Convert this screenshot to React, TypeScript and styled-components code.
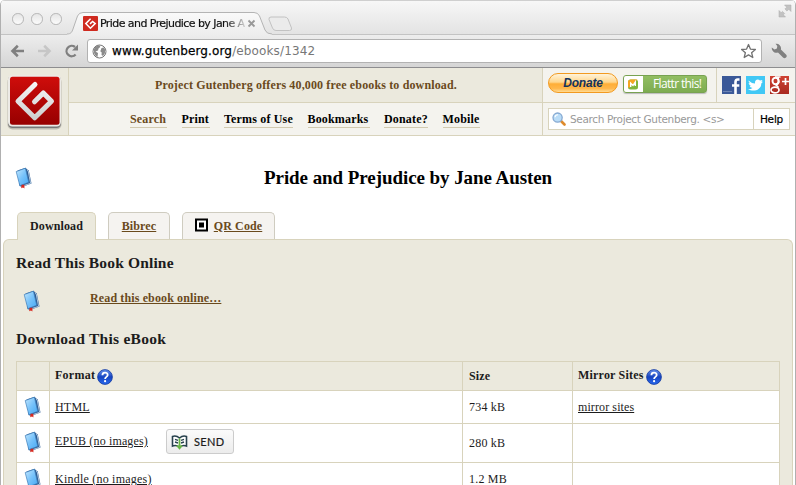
import React from "react";
import styled, { createGlobalStyle, css } from "styled-components";

const serif = `"Liberation Serif", "Times New Roman", serif`;
const sans = `"DejaVu Sans", "Lucida Grande", sans-serif`;
const line = "#d8d3bc";
const beige = "#ebe9dd";
const pale = "#f4f3ee";
const brown = "#6a4a1c";

const GlobalStyle = createGlobalStyle`
  * { box-sizing: border-box; }
  body { margin: 0; background: #fff; overflow: hidden; }
  svg { display: block; flex: none; }
`;

const Window = styled.div`
  width: 796px;
  height: 485px;
  overflow: hidden;
  display: flex;
  flex-direction: column;
  border: solid #b0b0b0;
  border-width: 0 1px;
  border-radius: 5px 5px 0 0;
  font-family: ${serif};
  color: #1c1c1c;
`;

/* Browser frame */
const TitleBar = styled.div`
  height: 34px;
  flex: none;
  display: flex;
  background: linear-gradient(#f7f7f7, #e3e3e3);
  border-top: 1px solid #cfcfcf;
`;
const Lights = styled.div`
  display: flex;
  gap: 7.5px;
  padding: 12px 0 0 11px;
  width: 66px;
`;
const Light = styled.i`
  width: 11.5px;
  height: 11.5px;
  border: 1px solid #b5b5b5;
  border-radius: 50%;
  background: linear-gradient(#e6e6e6, #fbfbfb);
`;
const TabWrap = styled.div`
  position: relative;
  width: 209px;
  height: 35px;
  flex: none;
  margin-top: -1px;
`;
const TabShape = styled.svg`
  position: absolute;
  left: 0;
  top: 0;
`;
const TabContent = styled.div`
  position: relative;
  display: flex;
  align-items: center;
  height: 15px;
  margin: 16px 0 0 16px;
`;
const TabTitle = styled.span`
  width: 147px;
  margin-left: 2px;
  white-space: nowrap;
  font: 11px/15px ${sans};
  letter-spacing: -0.57px;
  color: #111;
  -webkit-text-stroke: 0.2px #111;
  mask-image: linear-gradient(90deg, #000 125px, transparent 149px);
`;
const NewTab = styled.svg`
  margin: 15px 0 0 -9px;
`;
const Expand = styled.svg`
  margin: 3px 3px 0 auto;
`;
const Toolbar = styled.div`
  height: 34px;
  flex: none;
  display: flex;
  align-items: center;
  padding: 0 8px 0 9px;
  background: linear-gradient(#ededed, #d5d5d5);
  border-top: 1px solid #c3c3c3;
  border-bottom: 1px solid #8d8d8f;
`;
const NavIcons = styled.div`
  display: flex;
  width: 77px;
  gap: 12px;
`;
const Omnibox = styled.div`
  width: 675px;
  height: 24px;
  display: flex;
  align-items: center;
  padding: 0 4px;
  border: 1px solid #b2b2b2;
  border-radius: 3px;
  background: #fff;
`;
const Url = styled.span`
  flex: 1;
  margin-left: 5px;
  font: 12px/18px ${sans};
  color: #777;
  letter-spacing: 0.13px;
  b { font-weight: 400; color: #000; -webkit-text-stroke: 0.25px #000; }
`;
const WrenchIcon = styled.svg`
  margin-left: 9px;
`;

/* Site header */
const Header = styled.header`
  display: grid;
  grid-template-columns: 68px 474px 252px;
  height: 68px;
  flex: none;
  border-bottom: 1px solid ${line};
`;
const LogoCell = styled.div`
  background: ${beige};
  border-right: 1px solid ${line};
  padding: 6px 0 0 5px;
`;
const Middle = styled.div`
  display: flex;
  flex-direction: column;
  border-right: 1px solid ${line};
  background: ${pale};
`;
const Slogan = styled.div`
  height: 35px;
  background: ${beige};
  border-bottom: 1px solid ${line};
  padding: 9px 0 0 86px;
  font-weight: bold;
  font-size: 12px;
  line-height: 16px;
  letter-spacing: 0.145px;
  color: ${brown};
  white-space: nowrap;
`;
const Menu = styled.nav`
  display: flex;
  gap: 14.5px;
  padding: 8px 0 0 61px;
`;
const MenuLink = styled.a<{ $w: number; $active?: boolean }>`
  width: ${(p) => p.$w}px;
  height: 17px;
  border-bottom: 1px solid #d2cab0;
  white-space: nowrap;
  font-weight: bold;
  font-size: 12px;
  line-height: 16px;
  letter-spacing: 0.17px;
  color: ${(p) => (p.$active ? brown : "#000")};
`;
const Tools = styled.div`
  display: flex;
  flex-direction: column;
  background: ${pale};
`;
const ButtonsRow = styled.div`
  height: 35px;
  display: flex;
  padding-left: 5px;
  border-bottom: 1px solid ${line};
`;
const DonateButton = styled.button`
  width: 70px;
  height: 20px;
  margin-top: 5px;
  padding: 0;
  border: 1px solid #f29a20;
  border-radius: 10px;
  background: linear-gradient(#fff3d9, #ffd78e 45%, #ffae37 55%, #ffb74b 80%, #ffdb94);
  font: italic bold 12px/17px "Liberation Sans", sans-serif;
  letter-spacing: -0.2px;
  color: #14335c;
`;
const Flattr = styled.button`
  display: flex;
  align-items: center;
  width: 84px;
  height: 18px;
  margin: 7px 0 0 5px;
  padding: 0;
  border: 1px solid #78a251;
  border-radius: 3px;
  background: linear-gradient(#92be62, #7dac51);
  box-shadow: 0 1px 1px #bbb;
  font: 12px/16px "Open Sans", sans-serif;
  letter-spacing: -0.65px;
  white-space: nowrap;
  color: #fff;
`;
const FlattrMark = styled.span`
  display: flex;
  align-items: center;
  flex: none;
  width: 19px;
  height: 16px;
  padding-left: 4px;
  margin-right: 10px;
  border-radius: 2px 0 0 2px;
  background: #fff;
`;
const Social = styled.div`
  display: flex;
  gap: 5px;
  padding: 8px 0 0 5px;
  margin-left: 9px;
  border-left: 1px solid ${line};
`;
const SearchBox = styled.div`
  display: flex;
  width: 242px;
  height: 22px;
  margin: 5px 0 0 5px;
  border: 1px solid ${line};
  background: #fff;
  font: 10.5px/20px ${sans};
  white-space: nowrap;
`;
const SearchField = styled.div`
  display: flex;
  align-items: center;
  gap: 4px;
  width: 205px;
  padding-left: 3px;
  border-right: 1px solid ${line};
  letter-spacing: -0.34px;
  color: #999;
`;
const HelpButton = styled.div`
  flex: 1;
  text-align: center;
  color: #000;
  -webkit-text-stroke: 0.2px #000;
  letter-spacing: -0.2px;
`;

/* Book page */
const TitleRow = styled.div`
  display: flex;
  height: 76px;
  flex: none;
  padding: 31px 0 0 14px;
`;
const Title = styled.h1`
  margin: -1px 0 0 231px;
  font-size: 19px;
  line-height: 24px;
  letter-spacing: -0.07px;
  color: #000;
  white-space: nowrap;
`;
const Tabs = styled.div`
  display: flex;
  align-items: flex-start;
  gap: 12px;
  padding-left: 16px;
  height: 27px;
  flex: none;
`;
const PageTab = styled.a<{ $w: number; $active?: boolean }>`
  display: flex;
  justify-content: center;
  gap: 6px;
  width: ${(p) => p.$w}px;
  height: ${(p) => (p.$active ? 28 : 27)}px;
  position: relative;
  z-index: 1;
  padding-top: 5px;
  border: 1px solid ${(p) => (p.$active ? line : "#cfccc0")};
  border-bottom: 0;
  border-radius: 5px 5px 0 0;
  background: ${(p) => (p.$active ? beige : "#f5f3f0")};
  font-size: 12px;
  font-weight: bold;
  line-height: 16px;
  letter-spacing: 0.12px;
  white-space: nowrap;
  ${(p) => !p.$active && css`
    color: ${brown};
    span { text-decoration: underline; }
  `}
`;
const Panel = styled.main`
  flex: 1;
  margin: 0 2px 0 2px;
  padding: 0 13px 0 12px;
  border: 1px solid ${line};
  border-bottom: 0;
  border-radius: 6px 6px 0 0;
  background: ${beige};
  overflow: hidden;
`;
const Heading = styled.h2<{ $top: number; $s: number }>`
  margin: 0;
  padding-top: ${(p) => p.$top}px;
  font-size: 15.5px;
  line-height: 20px;
  letter-spacing: ${(p) => p.$s}px;
  white-space: nowrap;
`;
const OnlineRow = styled.div`
  display: flex;
  height: 40px;
  padding: 17px 0 0 7px;
`;
const OnlineLink = styled.a`
  margin: 0 0 0 49px;
  font-size: 12px;
  font-weight: bold;
  line-height: 16px;
  letter-spacing: 0.13px;
  text-decoration: underline;
  color: ${brown};
`;
const Table = styled.div`
  width: 764px;
  margin-top: 12px;
  border: 1px solid ${line};
  border-bottom: 0;
`;
const Row = styled.div<{ $h: number; $head?: boolean }>`
  display: grid;
  grid-template-columns: 33px 413px 110px 206px;
  height: ${(p) => p.$h}px;
  border-bottom: 1px solid ${line};
  background: ${(p) => (p.$head ? beige : "#fff")};
  font-size: 12px;
  font-weight: ${(p) => (p.$head ? "bold" : "normal")};
  line-height: 16px;
`;
const Cell = styled.div<{ $top?: number; $left?: number; $s?: number }>`
  display: flex;
  align-items: flex-start;
  padding: ${(p) => p.$top ?? 0}px 0 0 ${(p) => p.$left ?? 5}px;
  letter-spacing: ${(p) => p.$s ?? 0}px;
  white-space: nowrap;
  &:not(:last-child) { border-right: 1px solid ${line}; }
`;
const FileLink = styled.a`
  text-decoration: underline;
`;
const SendButton = styled.button`
  display: flex;
  align-items: center;
  gap: 6px;
  width: 68px;
  height: 25px;
  margin: -4px 0 0 18px;
  padding: 0 0 0 4px;
  border: 1px solid #ccc;
  border-radius: 3px;
  background: linear-gradient(#fbfbfb, #ececec);
  font: 11px/20px Lato, sans-serif;
  letter-spacing: 0.4px;
  color: #1c1c1c;
  -webkit-text-stroke: 0.2px #1c1c1c;
`;
const HelpWrap = styled.span`
  margin: 2px 0 0 2px;
`;

const Logo = () => (
  <svg width="56" height="56" viewBox="0 0 56 56">
    <defs>
      <linearGradient id="red" x2="0" y2="1"><stop stopColor="#cf0d0b" /><stop offset="1" stopColor="#970000" /></linearGradient>
      <linearGradient id="silver" x2="0" y2="1"><stop stopColor="#f4f4f4" /><stop offset="1" stopColor="#cfcfcf" /></linearGradient>
    </defs>
    <rect x="1.5" y="3" width="54" height="52.5" rx="5" fill="#0003" />
    <rect x="2" y="2" width="53" height="52" rx="4.5" fill="#777" />
    <rect x="2" y="1" width="53" height="51.5" rx="4.5" fill="#eceae6" />
    <rect x="4" y="2.8" width="49.5" height="48" rx="2.5" fill="url(#red)" />
    <path d="M29 10.500 12 27.200 28.700 43.800 45.500 27.200 37.300 19 28.500 27.800" fill="none" stroke="url(#silver)" strokeWidth="5" strokeLinecap="round" strokeLinejoin="round" />
  </svg>
);

const Book = () => (
  <svg width="18" height="22" viewBox="0 0 18 22">
    <defs><linearGradient id="bk" x2="1" y2="1"><stop stopColor="#c4e8fe" /><stop offset=".5" stopColor="#77c2fa" /><stop offset="1" stopColor="#45a9f5" /></linearGradient></defs>
    <path d="M2.500 3.400 10.500 .8 12.300 2.600 13.800 3.400 16.500 16.500 7 20 4.600 19Z" fill="#2c5b93" />
    <path d="M11.900 2.800 13.200 4 15.600 16.300 6.600 19.300" fill="none" stroke="#cfe2f1" strokeWidth=".8" />
    <path d="M1.200 4.600 10.400 1.200 13.700 15.300 4.800 18.700Z" fill="url(#bk)" stroke="#4180ba" strokeWidth=".7" />
    <path d="M6.600 17.800h2.800v3.800L8 20.400 6.200 21.200Z" fill="#d72a20" />
  </svg>
);

const HelpIcon = () => (
  <svg width="16" height="16" viewBox="0 0 16 16">
    <defs><linearGradient id="hp" x2="0" y2="1"><stop stopColor="#6a94ee" /><stop offset=".5" stopColor="#1644c0" /><stop offset="1" stopColor="#2b6cf0" /></linearGradient></defs>
    <circle cx="8" cy="8" r="7.4" fill="url(#hp)" stroke="#1238a0" strokeWidth=".8" />
    <path d="M5.400 6.200C5.400 2.800 10.700 3 10.700 6 10.700 8 8.100 7.800 8.100 10" fill="none" stroke="#fff" strokeWidth="1.800" />
    <circle cx="8.1" cy="12.2" r="1.1" fill="#fff" />
  </svg>
);

const Favicon = () => (
  <svg width="15" height="15" viewBox="0 0 15 15">
    <rect width="15" height="15" rx="1" fill="#cf2a1f" />
    <path d="M7.600 2.800 2.800 7.600 7.400 12.200 12.200 7.600 9.600 5.400 7 7.900" fill="none" stroke="#fff" strokeWidth="1.500" />
  </svg>
);

const Magnifier = () => (
  <svg width="14" height="14" viewBox="0 0 14 14">
    <path d="m8.500 8.500 4 4" stroke="#de8a2b" strokeWidth="2.600" strokeLinecap="round" />
    <circle cx="5.6" cy="5.6" r="4.6" fill="#b9dcf7" stroke="#86a9d2" strokeWidth="1.3" />
    <path d="M3 5.200C3.200 3.600 4.400 2.800 6 2.800" fill="none" stroke="#fff" strokeWidth="1.100" />
  </svg>
);

const files = [
  { name: "HTML", size: "734 kB", mirror: true, h: 33, top: 8, s: 0.2, icon: 5, sizeTop: 8 },
  { name: "EPUB (no images)", size: "280 kB", send: true, h: 39, top: 9, s: 0.14, icon: 7, sizeTop: 11 },
  { name: "Kindle (no images)", size: "1.2 MB", h: 39, top: 8, s: 0.22, icon: 5, sizeTop: 8 },
];

export default function App() {
  return (
    <Window>
      <GlobalStyle />
      <TitleBar>
        <Lights><Light /><Light /><Light /></Lights>
        <TabWrap>
          <TabShape width="209" height="35" viewBox="0 0 209 35">
            <defs><linearGradient id="tab" x2="0" y2="1"><stop stopColor="#fafafa" /><stop offset="1" stopColor="#ededed" /></linearGradient></defs>
            <path d="M0 35V34C4 34 5 32 6 29L10.500 16Q12 12.500 16 12.500H187Q191 12.500 192.500 16L198 30Q199.500 34 205 34V35Z" fill="url(#tab)" />
            <path d="M0 34C4 34 5 32 6 29L10.500 16Q12 12.500 16 12.500H187Q191 12.500 192.500 16L198 30Q199.500 34 205 34" fill="none" stroke="#b4b4b4" />
          </TabShape>
          <TabContent>
            <Favicon />
            <TabTitle>Pride and Prejudice by Jane A</TabTitle>
            <svg width="9" height="9" viewBox="0 0 9 9"><path d="m1.500 1.500 6 6m0-6-6 6" stroke="#999" strokeWidth="1.800" /></svg>
          </TabContent>
        </TabWrap>
        <NewTab width="26" height="16" viewBox="0 0 26 16">
          <path d="M4 1H17.500Q20 1 21 3L24.500 12Q25 14.500 22.500 14.500H9Q6.500 14.500 5.500 12L2 3.500Q1.500 1 4 1Z" fill="#ebebeb" stroke="#c2c2c2" />
        </NewTab>
        <Expand width="14" height="14" viewBox="0 0 14 14">
          <path d="M6.500 1H13V7.500L10.800 5.300 9 7.100 6.900 5 8.700 3.200ZM1 6.500 3.200 8.700 4.500 7.400 6.600 9.500 5.300 10.800 7.500 13H1Z" fill="#c2c2c2" stroke="#aaa" strokeWidth=".5" />
        </Expand>
      </TitleBar>
      <Toolbar>
        <NavIcons>
          <svg width="15" height="14" viewBox="0 0 15 14"><path d="M14 7H3M7.800 1.800 2.500 7l5.300 5.200" fill="none" stroke="#808080" strokeWidth="2.600" /></svg>
          <svg width="15" height="14" viewBox="0 0 15 14"><path d="M1 7h11M7.200 1.800 12.500 7l-5.300 5.200" fill="none" stroke="#c6c6c6" strokeWidth="2.600" /></svg>
          <svg width="15" height="14" viewBox="0 0 15 14"><path d="M11.600 10.500A5.200 5.200 0 1 1 11 3" fill="none" stroke="#808080" strokeWidth="2.300" /><path d="M14 .5V6.500H8Z" fill="#808080" /></svg>
        </NavIcons>
        <Omnibox>
          <svg width="15" height="15" viewBox="0 0 15 15">
            <circle cx="7.500" cy="7.500" r="6.500" fill="#fff" stroke="#777" />
            <path d="M2 5C3 2.500 5 1.300 7.500 1.300L8.300 3 6.500 4.500 6 6.500 3.500 7.500 6 9 5.500 13C3 12 1.300 9 2 5ZM9.500 4 12 3.500 13.300 6 12.800 9.500 11 12 9.500 11 9.700 8.600 8.300 7.200Z" fill="#8b8b8b" />
          </svg>
          <Url><b>www.gutenberg.org</b>/ebooks/1342</Url>
          <svg width="17" height="16" viewBox="0 0 17 16"><path d="m8.500 1.500 1.900 4.600 5 .4-3.800 3.200 1.200 4.800-4.300-2.600-4.300 2.600 1.200-4.800L1.600 6.500l5-.4Z" fill="#fff" stroke="#707070" strokeWidth="1.300" strokeLinejoin="round" /></svg>
        </Omnibox>
        <WrenchIcon width="16" height="16" viewBox="0 0 16 16">
          <path d="M4.500.8A4.700 4.700 0 0 1 9.900 6.500L15 11.500A2.100 2.100 0 0 1 12 14.500L7 9.600A4.700 4.700 0 0 1 .8 4.500L3.500 6.600 5.900 5.600 6.300 3Z" fill="#808080" />
        </WrenchIcon>
      </Toolbar>

      <Header>
        <LogoCell><Logo /></LogoCell>
        <Middle>
          <Slogan>Project Gutenberg offers 40,000 free ebooks to download.</Slogan>
          <Menu>
            <MenuLink $w={37} $active>Search</MenuLink>
            <MenuLink $w={28}>Print</MenuLink>
            <MenuLink $w={69}>Terms of Use</MenuLink>
            <MenuLink $w={62}>Bookmarks</MenuLink>
            <MenuLink $w={44}>Donate?</MenuLink>
            <MenuLink $w={37}>Mobile</MenuLink>
          </Menu>
        </Middle>
        <Tools>
          <ButtonsRow>
            <DonateButton>Donate</DonateButton>
            <Flattr>
              <FlattrMark>
                <svg width="10" height="11" viewBox="0 0 10 11"><rect y=".5" width="10" height="10" rx="2.500" fill="#80b53c" /><path d="M0 8V3Q0 .5 3 .5H9.500L1 9Z" fill="#f5a623" /><path d="M2.700 8V4.200L5 6.400 7.300 3V7" fill="none" stroke="#fff" strokeWidth="1.400" /></svg>
              </FlattrMark>
              Flattr this!
            </Flattr>
            <Social>
              <svg width="19" height="18" viewBox="0 0 19 18"><rect width="19" height="18" fill="#3b5998" /><path d="M17.500 3.500H15.800Q13.500 3.500 13.500 6V18M10 9.500H17.300" fill="none" stroke="#fff" strokeWidth="2.600" /><path d="M1 15.500h9" stroke="#6d84b4" /></svg>
              <svg width="19" height="18" viewBox="0 0 19 18"><rect width="19" height="18" fill="#41c8f5" /><path d="M2.500 4.500Q5.500 7.500 9 7.400C8.600 3.500 12.200 2.700 14 4.600L16.500 3.900 15.500 5.800 17 5.700 15.300 7.500C15.200 14.500 7 16.200 2 13.200Q5 13.200 6.500 12 4 11.500 3.500 9.700H5Q2.500 8.300 2.600 6.900L4 7.200Q2.300 5.800 2.500 4.500Z" fill="#fff" /></svg>
              <svg width="19" height="18" viewBox="0 0 19 18"><defs><linearGradient id="gp" x2="0" y2="1"><stop stopColor="#cf4232" /><stop offset="1" stopColor="#a82a20" /></linearGradient></defs><rect width="19" height="18" fill="url(#gp)" /><path d="M15.500 2v7M12 5.500h7" stroke="#fff" strokeWidth="1.700" /><ellipse cx="5.500" cy="5" rx="3" ry="3.300" fill="none" stroke="#fff" strokeWidth="1.900" /><path d="M5 1H10.500M8 1.500 9 6Q8.500 8 6.300 9.200L8.600 11.500" fill="none" stroke="#fff" strokeWidth="1.600" /><ellipse cx="5" cy="14" rx="4" ry="2.900" fill="none" stroke="#fff" strokeWidth="1.700" /></svg>
            </Social>
          </ButtonsRow>
          <SearchBox>
            <SearchField><Magnifier />Search Project Gutenberg. &lt;s&gt;</SearchField>
            <HelpButton>Help</HelpButton>
          </SearchBox>
        </Tools>
      </Header>

      <TitleRow>
        <Book />
        <Title>Pride and Prejudice by Jane Austen</Title>
      </TitleRow>
      <Tabs>
        <PageTab $w={79} $active><span>Download</span></PageTab>
        <PageTab $w={62}><span>Bibrec</span></PageTab>
        <PageTab $w={93}>
          <svg width="13" height="14" viewBox="0 0 13 14"><rect x="1" y="1.500" width="11" height="11" fill="#fff" stroke="#000" strokeWidth="2" /><path d="M4 4.500h5v5H4z" fill="#000" /></svg>
          <span>QR Code</span>
        </PageTab>
      </Tabs>
      <Panel>
        <Heading $top={13} $s={0.16}>Read This Book Online</Heading>
        <OnlineRow><Book /><OnlineLink>Read this ebook online…</OnlineLink></OnlineRow>
        <Heading $top={16} $s={0.25}>Download This eBook</Heading>
        <Table>
          <Row $h={29} $head>
            <Cell />
            <Cell $top={5} $s={0.25}>Format<HelpWrap><HelpIcon /></HelpWrap></Cell>
            <Cell $top={6} $left={6} $s={0.15}>Size</Cell>
            <Cell $top={5} $s={0.2}>Mirror Sites<HelpWrap><HelpIcon /></HelpWrap></Cell>
          </Row>
          {files.map((f) => (
            <Row key={f.name} $h={f.h}>
              <Cell $left={7} $top={f.icon}><Book /></Cell>
              <Cell $top={f.top} $s={f.s}>
                <FileLink>{f.name}</FileLink>
                {f.send && (
                  <SendButton>
                    <svg width="17" height="17" viewBox="0 0 17 17">
                      <path d="M1.500 3.500Q5 2 8.500 5 12 2 15.500 3.500V13Q12 11.500 8.500 14 5 11.500 1.500 13Z" fill="#fff" stroke="#28424e" strokeWidth="1.600" />
                      <path d="M4 6.300 7 7.300M4 9 7 10M13 6.300 10 7.300M13 9 10 10" stroke="#28424e" strokeWidth="1.400" />
                      <path d="M8.500 5.500V15M6 12.500 8.500 15.300 11 12.500" fill="none" stroke="#68b545" strokeWidth="1.800" />
                    </svg>
                    SEND
                  </SendButton>
                )}
              </Cell>
              <Cell $top={f.sizeTop} $left={6} $s={0.2}>{f.size}</Cell>
              <Cell $top={8} $s={0.1}>{f.mirror && <FileLink>mirror sites</FileLink>}</Cell>
            </Row>
          ))}
        </Table>
      </Panel>
    </Window>
  );
}
